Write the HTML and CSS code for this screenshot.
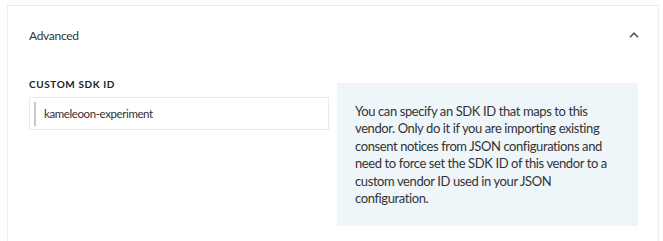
FILE: index.html
```html
<!DOCTYPE html>
<html lang="en">
<head>
    <meta charset="UTF-8">
    <meta name="viewport" content="width=device-width, initial-scale=1.0">
    <title>Advanced</title>
    <link rel="stylesheet" href="styles.css">
</head>
<body>
    <section class="panel">
        <header class="panel-header">
            <span class="panel-title">Advanced</span>
            <svg class="chevron" width="10" height="6" viewBox="0 0 10 6">
                <path d="M1 5.2 L5 1.2 L9 5.2" fill="none" stroke="#555" stroke-width="1.6"/>
            </svg>
        </header>
        <div class="panel-body">
            <div class="field">
                <label class="field-label" for="sdk-id">Custom SDK ID</label>
                <div class="input-box">
                    <input id="sdk-id" type="text" value="kameleoon-experiment">
                </div>
            </div>
            <div class="help-box">
                You can specify an SDK ID that maps to this vendor. Only do it if you are importing existing consent notices from JSON configurations and need to force set the SDK ID of this vendor to a custom vendor ID used in your JSON configuration.
            </div>
        </div>
    </section>
</body>
</html>
```

FILE: styles.css
```css
body {
    margin: 0;
    padding: 0;
    background-color: #fff;
    font-family: Lato, "Open Sans", sans-serif;
    color: #333;
}
.panel {
    margin: 5px 4px 0 7px;
    border: 1px solid #ececec;
    border-bottom: none;
    height: 240px;
}
.panel-header {
    display: flex;
    justify-content: space-between;
    align-items: center;
    padding: 19px 19px 0 21px;
    height: 20px;
}
.panel-title {
    font-size: 12px;
    letter-spacing: -0.3px;
    color: #333;
}
.chevron {
    display: block;
}
.panel-body {
    display: grid;
    grid-template-columns: 300px 301px;
    align-items: start;
    gap: 8px;
    padding: 35px 0 0 21px;
}
.field-label {
    display: block;
    font-size: 10px;
    font-weight: bold;
    text-transform: uppercase;
    letter-spacing: 0.6px;
    color: #222;
    margin-top: -2px;
    line-height: 12px;
}
.input-box {
    margin-top: 7px;
    border: 1px solid #eaeaea;
    height: 31px;
    display: flex;
    align-items: center;
    padding-left: 4px;
}
.input-box input {
    border: none;
    border-left: 2px solid #c8c8c8;
    height: 24px;
    padding: 0 0 0 8px;
    font-family: Lato, sans-serif;
    font-size: 11.5px;
    letter-spacing: -0.4px;
    color: #333;
    outline: none;
    width: 100%;
}
.help-box {
    margin-top: 3px;
    background-color: #eff6fa;
    padding: 20px 18px 19px 18px;
    font-size: 13px;
    letter-spacing: -0.4px;
    line-height: 17.4px;
    color: #333;
}
```
